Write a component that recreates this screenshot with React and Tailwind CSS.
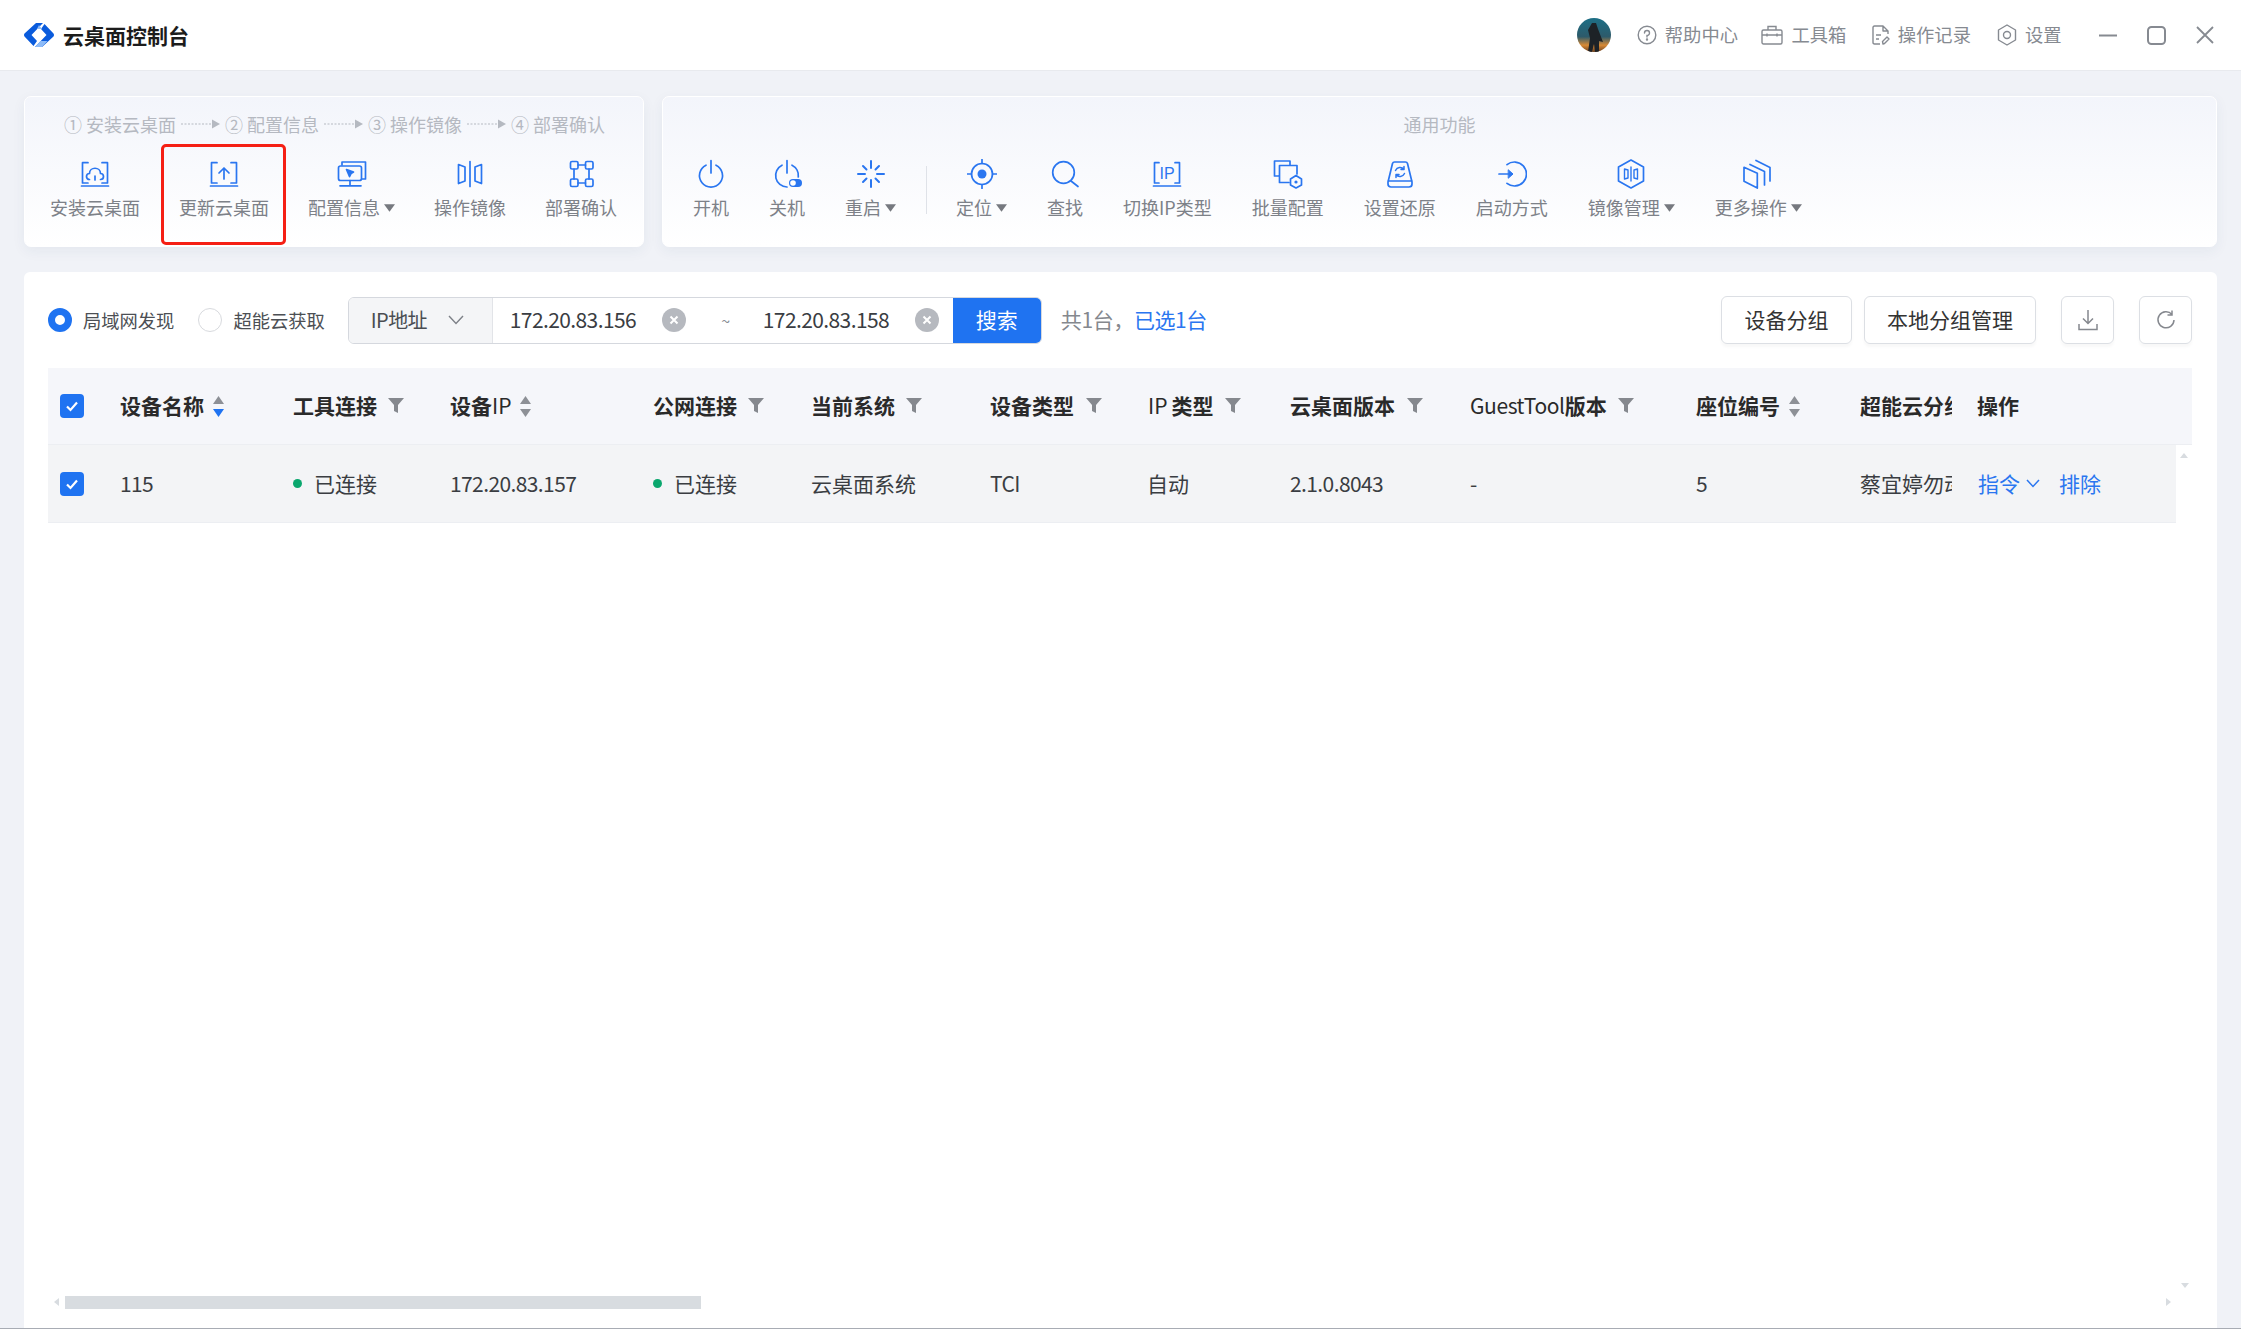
import React from "react";

const sw = { fill: "none", stroke: "#2a76f0", strokeWidth: 1.7, strokeLinecap: "round", strokeLinejoin: "round" };
const Ico = ({ children }) => (
  <svg viewBox="0 0 30 30" className="w-[30px] h-[30px] block shrink-0" {...sw}>{children}</svg>
);
const Frame = () => <path d="M8 3.7H2.5V24H8M22 3.7H27.5V24H22M1.5 27H28.5" />;

const icons = {
  install: <Ico><Frame /><path d="M9.5 20.5C5.5 20.5 5.5 14.5 9.5 14.5C9.5 7.5 20.5 7.5 20.5 14.5C24.5 14.5 24.5 20.5 20.5 20.5M15 17V21" /></Ico>,
  update: <Ico><Frame /><path d="M15 20V9M10 14L15 9L20 14" /></Ico>,
  config: <Ico><path d="M5 6V3H28.5V20H25" /><rect x="1.5" y="7" width="23" height="14.5" rx="2" /><path d="M13 21.5V26.5M3 26.8H24" /><path d="M9.5 10.5L16.5 13L14 14.5L12.5 17.5Z" fill="#2a76f0" /></Ico>,
  mirror: <Ico><path d="M3.5 5.5L10 8V22L3.5 24.5ZM15 2.5V27.5M26.5 5.5L20 8V22L26.5 24.5Z" /></Ico>,
  deploy: <Ico><rect x="4.5" y="2.5" width="7.5" height="7.5" rx="1.5" /><rect x="19.5" y="2.5" width="7.5" height="7.5" rx="1.5" /><rect x="4.5" y="20" width="7.5" height="7.5" rx="1.5" /><rect x="19.5" y="20" width="7.5" height="7.5" rx="1.5" /><path d="M12 6H19.5M12 24H19.5M8 10V20M23 10V20" /></Ico>,
  power: <Ico><path d="M10 6.2A11.5 11.5 0 1 0 20 6.2M15 1.5V14" /></Ico>,
  off: <Ico><path d="M10 6.2A11.5 11.5 0 0 0 15 28M20 6.2A11.5 11.5 0 0 1 26.3 18M15 1.5V14" /><rect x="17" y="20" width="13" height="8" rx="4" fill="#2a76f0" stroke="none" /><circle cx="21" cy="24" r="2.8" fill="#fff" stroke="none" /></Ico>,
  restart: <Ico><path d="M15 2V9M15 21V28M2 15H9M21 15H28M7 7L10.5 10.5M23 7L19.5 10.5M7 23L10.5 19.5M23 23L19.5 19.5" strokeWidth="2" /></Ico>,
  locate: <Ico><circle cx="15" cy="15" r="10.5" /><circle cx="15" cy="15" r="4.5" fill="#2a76f0" stroke="none" /><path d="M15 0.5V4.5M15 25.5V29.5M0.5 15H4.5M25.5 15H29.5" /></Ico>,
  search: <Ico><circle cx="13.5" cy="13.5" r="10.8" /><path d="M21 22L28 27.5" /></Ico>,
  ip: <Ico><path d="M7 3.7H2.5V24H7M23 3.7H27.5V24H23M1.5 27H28.5" /><text x="15" y="19.5" textAnchor="middle" fontSize="16" fontFamily="'Liberation Sans',sans-serif" fill="#2a76f0" stroke="none">IP</text></Ico>,
  batch: <Ico><path d="M5.5 17H1.5V2H17V6M24 15V6.5H6.5V23.5H16" /><path d="M23 16.5L28.5 20V26L23 29L17.5 26V20Z" /><circle cx="23" cy="23" r="1.6" fill="#2a76f0" stroke="none" /></Ico>,
  restore: <Ico><path d="M7.5 4.5Q8 3 9.5 3H20.5Q22 3 22.5 4.5L27 23V25Q27 28 24 28H6Q3 28 3 25V23ZM3 22H27" /><path d="M10.5 11.5A5 5 0 0 1 19 10.5M19.5 14.5A5 5 0 0 1 11 15.5M19 7.5V10.5H16M11 18.5V15.5H14" strokeWidth="1.5" /></Ico>,
  start: <Ico><path d="M10 5.6A12 12 0 1 1 10 24.4M2 15H15" /><path d="M11.5 11L16 15L11.5 19Z" fill="#2a76f0" strokeWidth="1" /></Ico>,
  mirrorMgmt: <Ico><path d="M15 1L27.5 8V22L15 29L2.5 22V8Z" /><path d="M15 8V22M8.5 10L12 11V19L8.5 20ZM21.5 10L18 11V19L21.5 20Z" strokeWidth="1.4" /></Ico>,
  more: <Ico><path d="M1 8.3V22.3L14.3 29V14.3ZM7 5.5L21.5 12.5V26M13 1.5L27 8.5V22" /></Ico>,
};

const Tri = () => (
  <svg viewBox="0 0 10 7" className="w-[11px] h-[8px] ml-[4px] mt-[1px] shrink-0"><path d="M0 0H10L5 7Z" fill="#76797f" /></svg>
);

const Item = ({ icon, label, drop, children }) => (
  <div className="relative flex flex-col items-center shrink-0">
    {icon}
    <div className="mt-[5px] flex items-center h-[26px] text-[18px] leading-[26px] text-[#7d8188] whitespace-nowrap">
      {label}
      {drop && <Tri />}
    </div>
    {children}
  </div>
);

const Arrow = () => (
  <svg viewBox="0 0 39 10" className="w-[39px] h-[10px] mx-[5px] shrink-0">
    <path d="M0 5H32" stroke="#b5b9c1" strokeWidth="1" strokeDasharray="2 1.5" />
    <path d="M31 0.5L39 5L31 9.5Z" fill="#b5b9c1" />
  </svg>
);

const Step = ({ n, t }) => (
  <span className="flex items-center gap-[4px] text-[18px] leading-[26px] text-[#b5b9c1] whitespace-nowrap">
    <span>{n}</span>
    <span>{t}</span>
  </span>
);

const Funnel = () => (
  <svg viewBox="0 0 16 15" className="w-[16px] h-[15px] shrink-0"><path d="M0 0H16L10 7V15L6 13V7Z" fill="#85888e" /></svg>
);
const Sort = ({ active }) => (
  <svg viewBox="0 0 13 21" className="w-[13px] h-[21px] shrink-0">
    <path d="M6.5 0L12 8H1Z" fill="#8d9096" />
    <path d="M1 13H12L6.5 21Z" fill={active ? "#1f73f1" : "#8d9096"} />
  </svg>
);

const Check = () => (
  <span className="w-[24px] h-[24px] rounded-[4px] bg-[#1f73f1] flex items-center justify-center">
    <svg viewBox="0 0 16 16" className="w-[16px] h-[16px]"><path d="M3 8.5L6.5 12L13 4.5" fill="none" stroke="#fff" strokeWidth="2.2" /></svg>
  </span>
);

const Clear = () => (
  <span className="w-[24px] h-[24px] rounded-full bg-[#b6b9bf] flex items-center justify-center shrink-0">
    <svg viewBox="0 0 12 12" className="w-[12px] h-[12px]"><path d="M2.5 2.5L9.5 9.5M9.5 2.5L2.5 9.5" stroke="#fff" strokeWidth="2" /></svg>
  </span>
);

const Dot = () => <span className="w-[9px] h-[9px] rounded-full bg-[#0aa76e] shrink-0" />;

const Head = ({ children, extra, className }) => (
  <div className={`flex items-center text-[21px] font-bold text-[#2a2a2a] whitespace-nowrap ${className || ""}`}>
    {children}
    {extra}
  </div>
);

const hcols = "grid grid-cols-[72px_173px_157px_203px_158px_179px_157px_143px_180px_226px_164px_117px_215px]";
const rcols = "grid grid-cols-[72px_173px_157px_203px_158px_179px_157px_143px_180px_226px_164px_117px_199px]";
const num = "tracking-[-0.6px]";

const Tool = ({ children, label }) => (
  <div className="flex items-center gap-[8px] text-[18.3px] text-[#868a91] whitespace-nowrap">
    {children}
    <span>{label}</span>
  </div>
);

export default function App() {
  return (
    <div className="w-full h-screen overflow-hidden flex flex-col bg-[#f0f2f7] border-b border-[#a8acb4] font-['Noto_Sans_CJK_SC','Noto_Sans',sans-serif]">
      {/* title bar */}
      <header className="h-[71px] shrink-0 bg-white border-b border-[#e8eaee] flex items-center pl-[24px] pr-[27px]">
        <svg viewBox="0 0 30 24" className="w-[30px] h-[24px] shrink-0">
          <path d="M12 0H19L7.5 12L13 18L9.5 23L0.5 13.5Q-0.5 12 0.5 10.5Z" fill="#0a5bdc" />
          <path d="M18 24H11L22.5 12L17 6L20.5 1L29.5 10.5Q30.5 12 29.5 13.5Z" fill="#0a5bdc" />
          <path d="M11 24H18L23.5 18H16.5Z" fill="#8dbbf8" />
          <path d="M13 6H18L15 2Z" fill="#8dbbf8" />
        </svg>
        <span className="ml-[9px] mt-[1px] text-[21px] font-bold text-[#1c1c1c]">云桌面控制台</span>
        <div className="ml-auto flex items-center">
          <svg viewBox="0 0 34 34" className="w-[34px] h-[34px] shrink-0 rounded-full">
            <defs>
              <linearGradient id="av" x1="0" y1="0" x2="0" y2="1">
                <stop offset="0" stopColor="#1d6f86" />
                <stop offset="0.55" stopColor="#2d5a6a" />
                <stop offset="0.8" stopColor="#d98a35" />
                <stop offset="1" stopColor="#6b4020" />
              </linearGradient>
            </defs>
            <rect width="34" height="34" fill="url(#av)" />
            <path d="M15 5H19L21 11L26 24L22 23L22 34H18L17 26L15 34H11L13 20L11 12Z" fill="#1d2227" />
          </svg>
          <div className="ml-[26px]">
            <Tool label="帮助中心">
              <svg viewBox="0 0 20 20" className="w-[20px] h-[20px]" fill="none" stroke="#868a91" strokeWidth="1.4" strokeLinecap="round">
                <circle cx="10" cy="10" r="8.8" />
                <path d="M7.5 8A2.5 2.5 0 1 1 10 10.5V12" />
                <circle cx="10" cy="14.5" r="0.5" />
              </svg>
            </Tool>
          </div>
          <div className="ml-[23.5px]">
            <Tool label="工具箱">
              <svg viewBox="0 0 22 20" className="w-[22px] h-[20px]" fill="none" stroke="#868a91" strokeWidth="1.4">
                <rect x="1" y="5" width="20" height="14" rx="1.5" />
                <path d="M7 5V1.5H15V5M1 10H21M6 8.5V11.5M16 8.5V11.5" />
              </svg>
            </Tool>
          </div>
          <div className="ml-[25.5px]">
            <Tool label="操作记录">
              <svg viewBox="0 0 18 20" className="w-[18px] h-[20px]" fill="none" stroke="#868a91" strokeWidth="1.4" strokeLinejoin="round">
                <path d="M8 19H2.5Q1 19 1 17.5V2.5Q1 1 2.5 1H11L16 6V9M11 1V6H16" />
                <path d="M4 10H9M4 14H7M11 19L10.5 16.5L15 12L17 14L12.5 18.5Z" />
              </svg>
            </Tool>
          </div>
          <div className="ml-[26px]">
            <Tool label="设置">
              <svg viewBox="0 0 20 22" className="w-[20px] h-[22px]" fill="none" stroke="#868a91" strokeWidth="1.4" strokeLinejoin="round">
                <path d="M10 1L18.5 6V16L10 21L1.5 16V6Z" />
                <circle cx="10" cy="11" r="3.5" />
              </svg>
            </Tool>
          </div>
          <div className="ml-[37.5px] flex items-center gap-[30px]">
            <svg viewBox="0 0 18 18" className="w-[18px] h-[18px]"><path d="M0 9.5H18" stroke="#868a91" strokeWidth="2" /></svg>
            <svg viewBox="0 0 19 19" className="w-[19px] h-[19px]"><rect x="1" y="1" width="17" height="17" rx="3.5" fill="none" stroke="#868a91" strokeWidth="2" /></svg>
            <svg viewBox="0 0 18 18" className="w-[18px] h-[18px]"><path d="M1 1L17 17M17 1L1 17" stroke="#868a91" strokeWidth="1.8" /></svg>
          </div>
        </div>
      </header>

      {/* toolbars */}
      <div className="mt-[25px] mx-[24px] flex gap-[18px] h-[151px] shrink-0">
        <section className="w-[620px] rounded-[7px] border border-white bg-gradient-to-b from-[#f3f5fb] to-white shadow-[0_4px_14px_rgba(40,60,110,0.06)] flex flex-col">
          <div className="pt-[14px] pl-[39px] flex items-center">
            <Step n="①" t="安装云桌面" />
            <Arrow />
            <Step n="②" t="配置信息" />
            <Arrow />
            <Step n="③" t="操作镜像" />
            <Arrow />
            <Step n="④" t="部署确认" />
          </div>
          <div className="mt-[22px] pl-[25px] flex gap-[39px]">
            <Item icon={icons.install} label="安装云桌面" />
            <Item icon={icons.update} label="更新云桌面">
              <span className="absolute -left-[18px] -right-[17px] -top-[15px] -bottom-[25px] border-[3.5px] border-[#f51f14] rounded-[5px]" />
            </Item>
            <Item icon={icons.config} label="配置信息" drop />
            <Item icon={icons.mirror} label="操作镜像" />
            <Item icon={icons.deploy} label="部署确认" />
          </div>
        </section>
        <section className="flex-1 rounded-[7px] border border-white bg-gradient-to-b from-[#f3f5fb] to-white shadow-[0_4px_14px_rgba(40,60,110,0.06)] flex flex-col">
          <div className="pt-[14px] text-center text-[18px] leading-[26px] text-[#b5b9c1]">通用功能</div>
          <div className="mt-[22px] pl-[30px] flex gap-[40px]">
            <Item icon={icons.power} label="开机" />
            <Item icon={icons.off} label="关机" />
            <Item icon={icons.restart} label="重启" drop />
            <span className="w-px h-[48px] mt-[7px] -mx-[10.5px] bg-[#dfe2e8] shrink-0" />
            <Item icon={icons.locate} label="定位" drop />
            <Item icon={icons.search} label="查找" />
            <Item icon={icons.ip} label="切换IP类型" />
            <Item icon={icons.batch} label="批量配置" />
            <Item icon={icons.restore} label="设置还原" />
            <Item icon={icons.start} label="启动方式" />
            <Item icon={icons.mirrorMgmt} label="镜像管理" drop />
            <Item icon={icons.more} label="更多操作" drop />
          </div>
        </section>
      </div>

      {/* main card */}
      <main className="relative mt-[25px] ml-[24px] mr-[24px] flex-1 min-h-0 bg-white rounded-t-[6px] px-[24px] pr-[25px] pt-[24px]">
        <div className="flex items-center h-[48px]">
          <span className="w-[24px] h-[24px] rounded-full border-[7px] border-[#1f73f1] bg-white shrink-0" />
          <span className="ml-[11px] mt-[2px] text-[18.3px] text-[#4c4f54] whitespace-nowrap">局域网发现</span>
          <span className="ml-[24px] w-[24px] h-[24px] rounded-full border border-[#d8dade] bg-white shrink-0" />
          <span className="ml-[11px] mt-[2px] text-[18.3px] text-[#4c4f54] whitespace-nowrap">超能云获取</span>

          <div className="ml-[23px] w-[694px] h-[47px] flex rounded-[6px] border border-[#d5d8de] overflow-hidden shrink-0">
            <div className="w-[144px] shrink-0 bg-[#f4f5f7] border-r border-[#e2e4e8] pl-[22px] flex items-center text-[20px] text-[#4a4d52]">
              <span className={num}>IP地址</span>
              <svg viewBox="0 0 16 10" className="w-[16px] h-[10px] ml-[21px]"><path d="M1 1L8 8.5L15 1" fill="none" stroke="#7d8188" strokeWidth="1.4" /></svg>
            </div>
            <div className="w-[213px] shrink-0 pl-[17px] flex items-center text-[21px] text-[#3a3d42]">
              <span className={`w-[152px] ${num}`}>172.20.83.156</span>
              <Clear />
            </div>
            <div className="w-[40px] shrink-0 flex items-center justify-center text-[16px] text-[#8a8e96]">~</div>
            <div className="flex-1 pl-[17px] flex items-center text-[21px] text-[#3a3d42]">
              <span className={`w-[152px] ${num}`}>172.20.83.158</span>
              <Clear />
            </div>
            <div className="w-[88px] shrink-0 bg-[#1f73f1] text-white text-[21px] flex items-center justify-center">搜索</div>
          </div>

          <span className="ml-[19px] text-[21px] text-[#85888e] tracking-[-0.4px] whitespace-nowrap">共1台，<span className="text-[#2a76f0]">已选1台</span></span>

          <div className="ml-auto flex items-center">
            <button className="w-[131px] h-[48px] rounded-[6px] border border-[#dcdfe4] shadow-[0_3px_3px_rgba(0,0,0,0.03)] text-[21px] text-[#333]">设备分组</button>
            <button className="ml-[12px] w-[172px] h-[48px] rounded-[6px] border border-[#dcdfe4] shadow-[0_3px_3px_rgba(0,0,0,0.03)] text-[21px] text-[#333]">本地分组管理</button>
            <button className="ml-[25px] w-[53px] h-[48px] rounded-[6px] border border-[#dcdfe4] shadow-[0_3px_3px_rgba(0,0,0,0.03)] flex items-center justify-center">
              <svg viewBox="0 0 22 22" className="w-[22px] h-[22px]" fill="none" stroke="#85888e" strokeWidth="1.5"><path d="M11 1V14M6 9.5L11 14.5L16 9.5M2 15V20.5H20V15" /></svg>
            </button>
            <button className="ml-[25px] w-[53px] h-[48px] rounded-[6px] border border-[#dcdfe4] shadow-[0_3px_3px_rgba(0,0,0,0.03)] flex items-center justify-center">
              <svg viewBox="0 0 22 22" className="w-[22px] h-[22px]" fill="none" stroke="#85888e" strokeWidth="1.5"><path d="M17 5.5A8 8 0 1 0 19 11M17 1.5V6H12.5" /></svg>
            </button>
          </div>
        </div>

        {/* table head */}
        <div className={`mt-[24px] h-[77px] bg-[#f5f6fa] border-b border-[#eceef2] ${hcols}`}>
          <div className="pl-[12px] flex items-center"><Check /></div>
          <Head extra={<span className="ml-[8px]"><Sort active /></span>}>设备名称</Head>
          <Head extra={<span className="ml-[11px] -mt-[2px]"><Funnel /></span>}>工具连接</Head>
          <Head extra={<span className="ml-[8px]"><Sort /></span>}>设备<span className="font-normal">IP</span></Head>
          <Head extra={<span className="ml-[11px] -mt-[2px]"><Funnel /></span>}>公网连接</Head>
          <Head extra={<span className="ml-[11px] -mt-[2px]"><Funnel /></span>}>当前系统</Head>
          <Head extra={<span className="ml-[12px] -mt-[2px]"><Funnel /></span>}>设备类型</Head>
          <Head extra={<span className="ml-[12px] -mt-[2px]"><Funnel /></span>} className="pl-[1px]"><span className="font-normal mr-[4px]">IP</span>类型</Head>
          <Head extra={<span className="ml-[12px] -mt-[2px]"><Funnel /></span>}>云桌面版本</Head>
          <Head extra={<span className="ml-[11px] -mt-[2px]"><Funnel /></span>}><span className="font-normal tracking-[-0.4px]">GuestTool</span>版本</Head>
          <Head extra={<span className="ml-[8px]"><Sort /></span>}>座位编号</Head>
          <Head className="overflow-hidden w-[92px]">超能云分组</Head>
          <Head>操作</Head>
        </div>

        {/* table row */}
        <div className={`w-[2128px] h-[78px] bg-[#f3f4f6] border-b border-[#eceef2] text-[21px] text-[#3a3d42] ${rcols}`}>
          <div className="pl-[12px] flex items-center"><Check /></div>
          <div className={`flex items-center ${num}`}>115</div>
          <div className="flex items-center gap-[12px]"><Dot />已连接</div>
          <div className={`flex items-center ${num}`}>172.20.83.157</div>
          <div className="flex items-center gap-[12px]"><Dot />已连接</div>
          <div className="flex items-center">云桌面系统</div>
          <div className={`flex items-center ${num}`}>TCI</div>
          <div className="flex items-center">自动</div>
          <div className={`flex items-center ${num}`}>2.1.0.8043</div>
          <div className="flex items-center">-</div>
          <div className="flex items-center">5</div>
          <div className="flex items-center overflow-hidden w-[92px] whitespace-nowrap">蔡宜婷勿动</div>
          <div className="flex items-center pl-[1px] text-[#2a76f0]">
            指令
            <svg viewBox="0 0 14 9" className="w-[14px] h-[9px] ml-[6px]"><path d="M1 1L7 7.5L13 1" fill="none" stroke="#2a76f0" strokeWidth="1.5" /></svg>
            <span className="ml-[19px]">排除</span>
          </div>
        </div>

        {/* scrollbars */}
        <span className="absolute left-[2156px] top-[181px] w-0 h-0 border-x-[4px] border-x-transparent border-b-[5px] border-b-[#d8dce0]" />
        <span className="absolute left-[2157px] top-[1011px] w-0 h-0 border-x-[4px] border-x-transparent border-t-[5px] border-t-[#d8dce0]" />
        <span className="absolute left-[30px] top-[1026px] w-0 h-0 border-y-[4px] border-y-transparent border-r-[5px] border-r-[#d8dce0]" />
        <span className="absolute left-[41px] top-[1024px] w-[636px] h-[13px] bg-[#d8dce0]" />
        <span className="absolute left-[2142px] top-[1026px] w-0 h-0 border-y-[4px] border-y-transparent border-l-[5px] border-l-[#d8dce0]" />
      </main>
    </div>
  );
}
